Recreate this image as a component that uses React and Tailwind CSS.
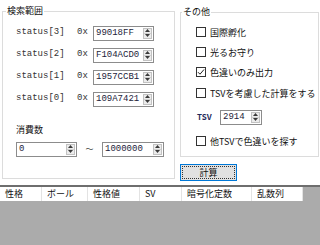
import React from 'react';

const jp = { fontFamily: '"Noto Sans CJK JP", "Noto Sans", sans-serif' };
const mono = { fontFamily: '"Liberation Mono", "DejaVu Sans Mono", monospace' };

const Arrow = ({ up }) => (
  <svg width="5" height="3" viewBox="0 0 5 3" aria-hidden="true">
    <path d={up ? 'M2.5 0L5 3H0z' : 'M0 0H5L2.5 3z'} fill="#3a3a3a" />
  </svg>
);

const Spin = () => (
  <div className="flex flex-col w-[9px] h-[11px] border border-[#c2c2c2] bg-[#ececec] shrink-0">
    <div className="flex-1 flex items-center justify-center border-b border-[#d0d0d0]">
      <Arrow up />
    </div>
    <div className="flex-1 flex items-center justify-center">
      <Arrow />
    </div>
  </div>
);

const NumBox = ({ value, className = '' }) => (
  <div className={`flex items-center h-[15px] border border-[#8c8c8c] bg-white pl-[2px] pr-[1px] ${className}`}>
    <span className="flex-1 text-[9px] leading-none text-[#1c1c3a]" style={mono}>{value}</span>
    <Spin />
  </div>
);

const StatusRow = ({ index, value }) => (
  <div className="flex items-center h-[22px]">
    <span className="w-[61px] text-[9px] text-[#333]" style={mono}>status[{index}]</span>
    <span className="w-[16px] text-[9px] text-[#333]" style={mono}>0x</span>
    <NumBox value={value} className="w-[61px]" />
  </div>
);

const Check = ({ label, checked }) => (
  <div className="flex items-center h-[20px]">
    <div className="w-[10px] h-[10px] border border-[#333] bg-white flex items-center justify-center shrink-0">
      {checked && (
        <svg width="8" height="8" viewBox="0 0 8 8" aria-hidden="true">
          <path d="M1 4.2L3 6.2L7 1.5" fill="none" stroke="#222" strokeWidth="1" />
        </svg>
      )}
    </div>
    <span className="ml-[4px] text-[9px] leading-none text-[#111]" style={jp}>{label}</span>
  </div>
);

const columns = [
  { label: '性格', w: 'w-[42px]' },
  { label: 'ボール', w: 'w-[46px]' },
  { label: '性格値', w: 'w-[52px]' },
  { label: 'SV', w: 'w-[42px]' },
  { label: '暗号化定数', w: 'w-[70px]' },
  { label: '乱数列', w: 'w-[51px]' },
];

export default function App() {
  return (
    <div className="w-[320px] h-[245px] bg-white flex flex-col overflow-hidden">
      <div className="h-[185px] flex">
        <fieldset className="ml-[2px] mt-[5px] w-[173px] h-[174px] border border-[#dcdcdc] pl-[13px] pb-[21px]">
          <legend className="ml-[-10px] px-[1px] text-[9px] leading-[12px] text-[#111]" style={jp}>検索範囲</legend>
          <div className="pt-[5px]">
            <StatusRow index={3} value="99018FF" />
            <StatusRow index={2} value="F104ACD0" />
            <StatusRow index={1} value="1957CCB1" />
            <StatusRow index={0} value="109A7421" />
          </div>
          <div className="mt-[14px] h-[12px] flex items-center text-[9px] text-[#111]" style={jp}>消費数</div>
          <div className="mt-[5px] flex items-center h-[16px]">
            <NumBox value="0" className="w-[61px]" />
            <span className="w-[25px] text-center text-[8px] text-[#444]" style={jp}>〜</span>
            <NumBox value="1000000" className="w-[62px]" />
          </div>
        </fieldset>

        <div className="ml-[5px] flex flex-col">
          <fieldset className="mt-[6px] w-[139px] h-[151px] border border-[#dcdcdc] pl-[15px]">
            <legend className="ml-[-14px] px-[1px] text-[9px] leading-[12px] text-[#111]" style={jp}>その他</legend>
            <div className="mt-[4px]">
              <Check label="国際孵化" />
              <Check label="光るお守り" />
              <Check label="色違いのみ出力" checked />
            </div>
            <div className="mt-[1px]">
              <Check label="TSVを考慮した計算をする" />
            </div>
            <div className="mt-[6px] flex items-center h-[16px]">
              <span className="w-[24px] pl-[1px] text-[8px] font-bold text-[#1e2a5a]" style={jp}>TSV</span>
              <NumBox value="2914" className="w-[42px] h-[14px]" />
            </div>
            <div className="mt-[6px]">
              <Check label="他TSVで色違いを探す" />
            </div>
          </fieldset>
          <button className="mt-[7px] w-[57px] h-[17px] border border-[#0078d7] bg-[#e1e1e1] p-[1px] flex">
            <span className="flex-1 flex items-center justify-center border border-dotted border-[#333] text-[9px] text-[#111]" style={jp}>計算</span>
          </button>
        </div>
      </div>

      <div className="h-[2px] bg-[#6e6e6e]" />
      <div className="flex-1 bg-[#ababab] flex flex-col">
        <div className="flex h-[14px]">
          {columns.map((c) => (
            <div
              key={c.label}
              className={`${c.w} h-full bg-white border-r border-[#e3e3e3] pl-[5px] flex items-center text-[9px] text-[#111]`}
              style={jp}
            >
              {c.label}
            </div>
          ))}
        </div>
      </div>
    </div>
  );
}
